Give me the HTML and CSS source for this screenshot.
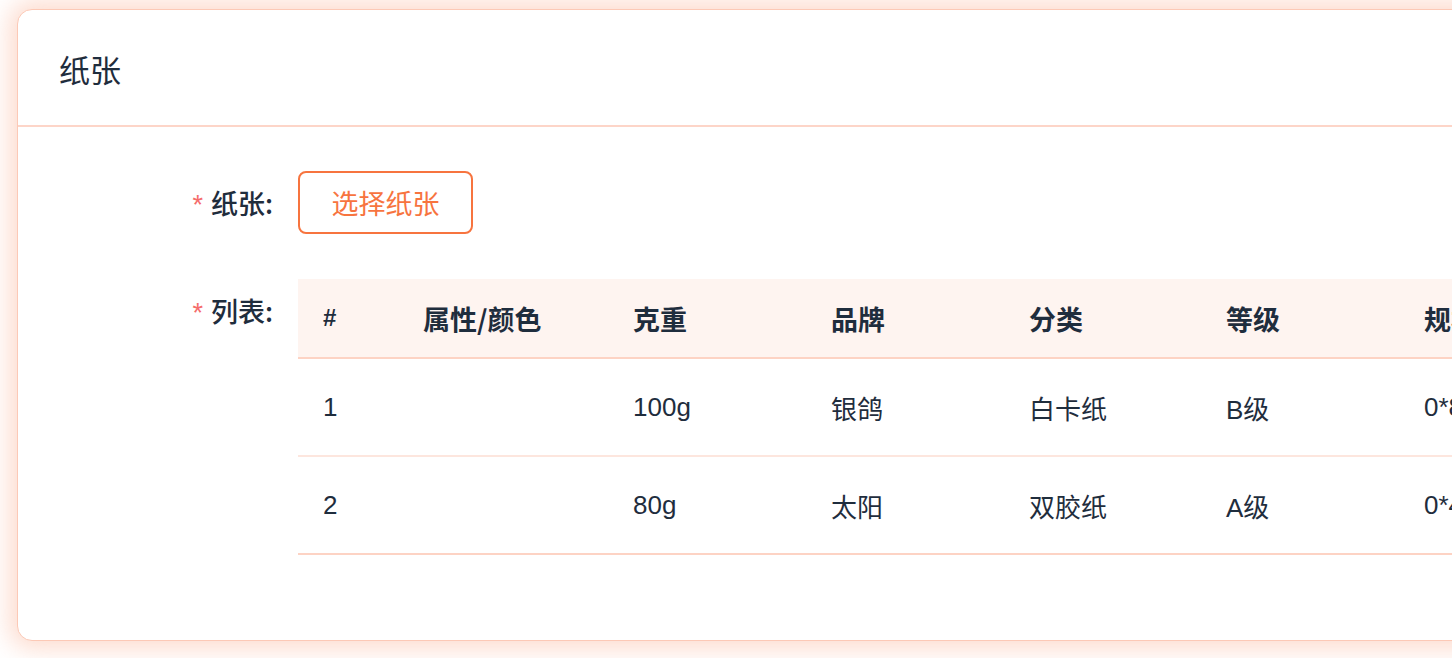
FILE: index.html
```html
<!DOCTYPE html>
<html lang="zh-CN">
<head>
<meta charset="utf-8">
<link rel="stylesheet" href="styles.css">
</head>
<body>
<div class="page">
  <div class="card">
    <div class="card-header">纸张</div>
    <div class="card-body">
      <div class="form-item">
        <label class="form-label"><span class="req">*</span>纸张:</label>
        <div class="form-content">
          <button class="btn">选择纸张</button>
        </div>
      </div>
      <div class="form-item">
        <label class="form-label"><span class="req">*</span>列表:</label>
        <div class="form-content">
          <table class="table">
            <colgroup>
              <col class="c0"><col class="c1"><col class="c2"><col class="c3"><col class="c4"><col class="c5"><col class="c6">
            </colgroup>
            <thead>
              <tr><th>#</th><th>属性/颜色</th><th>克重</th><th>品牌</th><th>分类</th><th>等级</th><th>规格</th></tr>
            </thead>
            <tbody>
              <tr><td>1</td><td></td><td>100g</td><td>银鸽</td><td>白卡纸</td><td>B级</td><td>0*800</td></tr>
              <tr><td>2</td><td></td><td>80g</td><td>太阳</td><td>双胶纸</td><td>A级</td><td>0*400</td></tr>
            </tbody>
          </table>
        </div>
      </div>
    </div>
  </div>
</div>
</body>
</html>
```

FILE: styles.css
```css
html, body {
  margin: 0;
  padding: 0;
  overflow: hidden;
  background: #ffffff;
  width: 1452px;
  height: 658px;
}
body {
  font-family: "Liberation Sans", "Noto Sans CJK SC", sans-serif;
  color: #1f2d3d;
}
.page {
  padding: 9px 0 0 17px;
  width: 1700px;
}
.card {
  width: 1600px;
  background: #fff;
  border: 1px solid #fcc9b6;
  border-radius: 15px;
  box-shadow: 0 0 24px 8px rgba(252, 196, 175, 0.6);
}
.card-header {
  height: 117px;
  line-height: 117px;
  padding-left: 41px;
  font-size: 31px;
  font-family: "Noto Sans CJK SC", sans-serif;
  border-bottom: 2px solid #fdd5c8;
  box-sizing: border-box;
}
.card-body {
  padding: 44px 0 85px 0;
}
.form-item {
  display: flex;
  align-items: flex-start;
}
.form-item + .form-item {
  margin-top: 45px;
}
.form-label {
  width: 280px;
  box-sizing: border-box;
  padding-right: 25px;
  text-align: right;
  height: 63px;
  line-height: 63px;
  font-size: 27px;
  font-weight: 500;
  font-family: "Noto Sans CJK SC", sans-serif;
  flex: none;
}
.req {
  color: #f56c6c;
  margin-right: 8px;
  font-size: 27px;
  font-family: "Liberation Sans", sans-serif;
}
.form-content {
  flex: 1;
}
.btn {
  height: 63px;
  width: 175px;
  border: 2px solid #f7743f;
  border-radius: 8px;
  background: #fff;
  color: #f7743f;
  font-size: 27px;
  font-family: "Noto Sans CJK SC", sans-serif;
  padding: 0;
  display: block;
}
.table {
  border-collapse: collapse;
  table-layout: fixed;
  width: 1300px;
  font-size: 28px;
}
.c0 { width: 100px; }
.c1 { width: 210px; }
.c2 { width: 198px; }
.c3 { width: 198px; }
.c4 { width: 197px; }
.c5 { width: 198px; }
.c6 { width: 199px; }
.table th {
  background: #fef4f0;
  height: 78px;
  padding: 0 0 0 25px;
  text-align: left;
  font-size: 27px;
  font-weight: 700;
  font-family: "Noto Sans CJK SC", sans-serif;
  border-bottom: 2px solid #fdd3c4;
  white-space: nowrap;
}
.table th:first-child {
  font-size: 24px;
  font-family: "Liberation Sans", sans-serif;
}
.table td {
  height: 96px;
  padding: 0 0 0 25px;
  text-align: left;
  border-bottom: 2px solid #fde6de;
  white-space: nowrap;
  font-size: 26px;
  font-family: "Liberation Sans", "Noto Sans CJK SC", sans-serif;
}
.table tbody tr:last-child td {
  border-bottom-color: #fdd3c4;
}
```
